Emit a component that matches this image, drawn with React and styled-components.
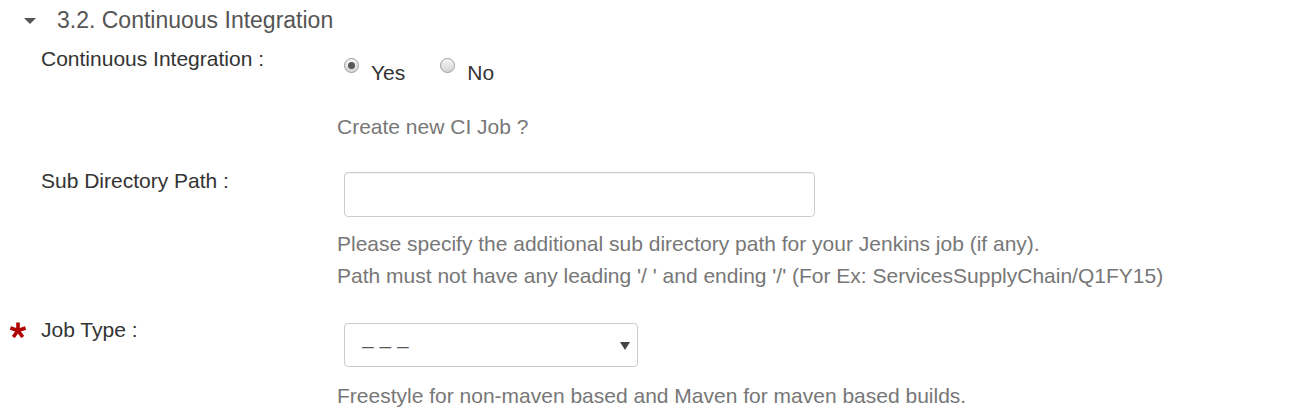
import styled, { createGlobalStyle } from "styled-components"

const Global = createGlobalStyle`
    body{
        margin: 0;
        background: #ffffff;
        font-family: "Liberation Sans", Arial, sans-serif;
    }
`

const Page = styled.div`
    width: 1305px;
    padding-top: 7px;
`

const SectionHeader = styled.div`
    display: flex;
    align-items: center;
    height: 26px;
    margin-bottom: 14px;
    padding-left: 24px;
`

const Caret = styled.span`
    width: 0;
    height: 0;
    border-left: 6px solid transparent;
    border-right: 6px solid transparent;
    border-top: 6px solid #555555;
    margin-right: 21px;
    margin-top: 1px;
`

const Title = styled.h3`
    margin: 0;
    font-size: 23px;
    line-height: 26px;
    font-weight: normal;
    color: #555555;
`

const FormRow = styled.div`
    display: grid;
    grid-template-columns: 337px 1fr;
    margin-bottom: 26px;
`

const Label = styled.label`
    display: flex;
    align-items: flex-start;
    padding-left: 41px;
    font-size: 21px;
    line-height: 24px;
    color: #333333;
`

const Required = styled.svg`
    margin-left: -33px;
    margin-right: 13px;
    margin-top: 4px;
    flex-shrink: 0;
`

const Control = styled.div`
    display: flex;
    flex-direction: column;
    align-items: flex-start;
`

const RadioGroup = styled.div`
    display: flex;
    margin-top: 14px;
    margin-left: 7px;
    gap: 35px;
`

const RadioOption = styled.label`
    display: flex;
    align-items: flex-start;
    font-size: 21px;
    line-height: 24px;
    color: #333333;
`

const RadioCircle = styled.span`
    width: 15px;
    height: 15px;
    box-sizing: border-box;
    border-radius: 50%;
    border: 1px solid #9c9c9c;
    background: linear-gradient(#f6f6f6, #d4d4d4);
    margin-top: -3px;
    margin-right: 12px;
    display: flex;
    align-items: center;
    justify-content: center;
    &::after{
        content: "";
        width: 7px;
        height: 7px;
        border-radius: 50%;
        background: ${p => (p.$checked ? "#575757" : "transparent")};
    }
`

const Help = styled.p`
    margin: ${p => p.$top}px 0 0 0;
    font-size: 21px;
    line-height: 32px;
    color: #777777;
`

const TextInput = styled.input`
    margin-top: 3px;
    margin-left: 7px;
    width: 471px;
    height: 45px;
    box-sizing: border-box;
    border: 1px solid #cccccc;
    border-radius: 4px;
    box-shadow: inset 0 1px 1px rgba(0, 0, 0, 0.05);
    font-family: inherit;
    font-size: 21px;
    padding: 0 12px;
    outline: none;
`

const SelectWrap = styled.div`
    position: relative;
    margin-top: 5px;
    margin-left: 7px;
    width: 294px;
    height: 44px;
`

const Select = styled.select`
    appearance: none;
    width: 100%;
    height: 100%;
    box-sizing: border-box;
    border: 1px solid #cccccc;
    border-radius: 4px;
    background: #ffffff;
    font-family: inherit;
    font-size: 21px;
    color: #555555;
    padding: 0 30px 0 17px;
    outline: none;
`

const Arrow = styled.span`
    position: absolute;
    right: 8px;
    top: 19px;
    width: 0;
    height: 0;
    border-left: 5px solid transparent;
    border-right: 5px solid transparent;
    border-top: 8px solid #444444;
    pointer-events: none;
`

const Star = () => (
    <Required width="20" height="16" viewBox="0 0 20 16">
        <g stroke="#b00000" strokeWidth="3.6" strokeLinecap="butt">
            <line x1="10" y1="8.5" x2="10" y2="0.5" />
            <line x1="10" y1="8.5" x2="17.6" y2="6" />
            <line x1="10" y1="8.5" x2="14.7" y2="15" />
            <line x1="10" y1="8.5" x2="5.3" y2="15" />
            <line x1="10" y1="8.5" x2="2.4" y2="6" />
        </g>
    </Required>
)

export default function App() {
    return (
        <>
            <Global />
            <Page>
                <SectionHeader>
                    <Caret />
                    <Title>3.2. Continuous Integration</Title>
                </SectionHeader>

                <FormRow>
                    <Label>Continuous Integration :</Label>
                    <Control>
                        <RadioGroup>
                            <RadioOption><RadioCircle $checked />Yes</RadioOption>
                            <RadioOption><RadioCircle />No</RadioOption>
                        </RadioGroup>
                        <Help $top={26}>Create new CI Job ?</Help>
                    </Control>
                </FormRow>

                <FormRow>
                    <Label>Sub Directory Path :</Label>
                    <Control>
                        <TextInput type="text" />
                        <Help $top={11}>
                            Please specify the additional sub directory path for your Jenkins job (if any).<br />
                            Path must not have any leading '/ ' and ending '/' (For Ex: ServicesSupplyChain/Q1FY15)
                        </Help>
                    </Control>
                </FormRow>

                <FormRow>
                    <Label><Star />Job Type :</Label>
                    <Control>
                        <SelectWrap>
                            <Select defaultValue="">
                                <option value="">– – –</option>
                                <option value="freestyle">Freestyle</option>
                                <option value="maven">Maven</option>
                            </Select>
                            <Arrow />
                        </SelectWrap>
                        <Help $top={13}>Freestyle for non-maven based and Maven for maven based builds.</Help>
                    </Control>
                </FormRow>
            </Page>
        </>
    )
}
